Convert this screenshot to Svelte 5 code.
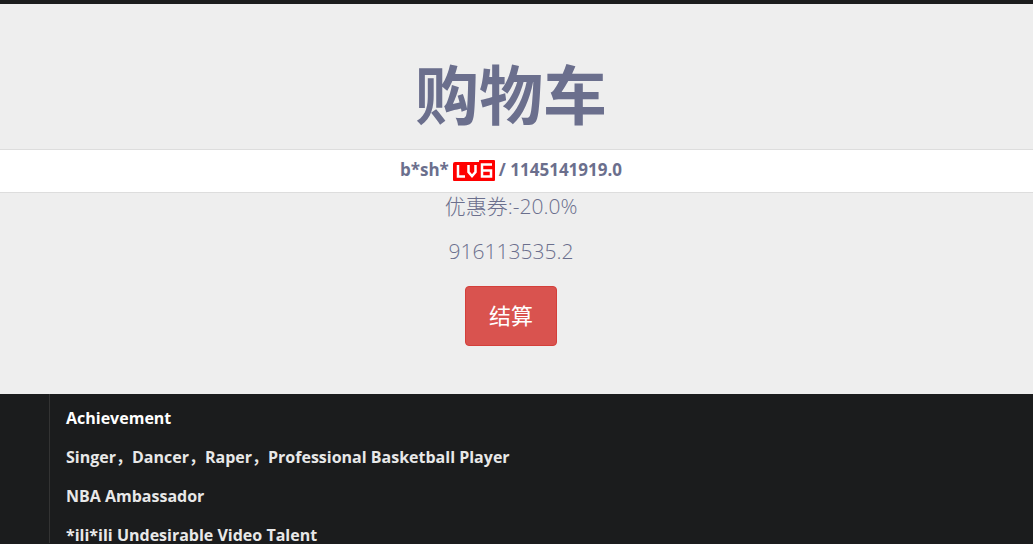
<script>
  const achievements = [
    'Achievement',
    'Singer，Dancer，Raper，Professional Basketball Player',
    'NBA Ambassador',
    '*ili*ili Undesirable Video Talent',
  ];
</script>

<div class="topbar"></div>
<main class="cart">
  <h1>购物车</h1>
  <ul class="items">
    <li>
      <span>b*sh*</span>
      <svg class="level" viewBox="0 0 42 22" role="img" aria-label="LV6">
        <path fill="#f00" d="M2 2H26V1Q26 0 27 0H41Q42 0 42 1V20Q42 21 41 21H1Q0 21 0 20V4Q0 2 2 2Z" />
        <path fill="none" stroke="#fff" stroke-width="2.5" d="M5 5V16.500H12M15.500 5V12L19 16L22.500 12V5M39 4.500H29V16.500H38V10.500H29" />
      </svg>
      <span>/ 1145141919.0</span>
    </li>
  </ul>
  <section class="summary">
    <p>优惠券:-20.0%</p>
    <p>916113535.2</p>
    <button type="button">结算</button>
  </section>
</main>
<footer>
  <div class="list">
    {#each achievements as item}
      <p>{item}</p>
    {/each}
  </div>
</footer>

<style>
  :global(body) {
    margin: 0;
    background: #1b1c1d;
    font-family: "Open Sans", "Noto Sans CJK SC", sans-serif;
  }
  .topbar {
    height: 4px;
    background: #1b1c1d;
  }
  .cart {
    padding: 46px 0 48px;
    background: #eee;
    color: #6b6f8d;
    text-align: center;
  }
  h1, li, .summary {
    padding-right: 11px;
  }
  h1 {
    margin: 0 0 10px;
    font-size: 64px;
    line-height: 89px;
    font-weight: 700;
  }
  .items {
    margin: 0;
    padding: 0;
    list-style: none;
    background: #fff;
    border: solid #ddd;
    border-width: 1px 0;
  }
  li {
    display: flex;
    justify-content: center;
    align-items: end;
    gap: 4px;
    padding-top: 8px;
    padding-bottom: 10px;
    font-size: 17px;
    line-height: 24px;
    font-weight: 700;
  }
  .level {
    width: 42px;
    height: 22px;
  }
  .summary p {
    margin: 0 0 19px;
    font-size: 21px;
    line-height: 26px;
    font-weight: 300;
  }
  button {
    display: block;
    margin: 22px auto 0;
    padding: 13px 23px 15px;
    border: 1px solid #d43f3a;
    border-radius: 4px;
    background: #d9534f;
    color: #fff;
    font: 400 22px/30px "Open Sans", "Noto Sans CJK SC", sans-serif;
  }
  footer {
    padding-left: 49px;
    background: #1b1c1d;
  }
  .list {
    display: grid;
    gap: 23px;
    padding: 16px 16px 0;
    border-left: 1px solid #333;
  }
  .list p {
    margin: 0;
    color: #e8e8e8;
    font-size: 16px;
    line-height: 16px;
    font-weight: 700;
  }
  .list p:first-child {
    color: #fff;
  }
</style>
